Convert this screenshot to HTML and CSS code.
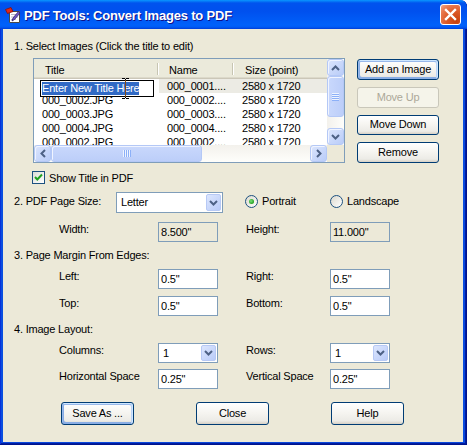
FILE: index.html
```html
<!DOCTYPE html>
<html>
<head>
<meta charset="utf-8">
<title>PDF Tools</title>
<link rel="stylesheet" href="styles.css">
</head>
<body>
<div class="window">
  <div class="titlebar">
    <svg class="app-icon" width="16" height="16" viewBox="0 0 16 16">
      <path d="M4.5 4.5 H14.5 V15.5 H4.5 Z" fill="#fff" stroke="#4a4a4a"/>
      <path d="M6 7.5 H13 M6 10 H13 M6 12.5 H11" stroke="#b8b8c8" stroke-width="1"/>
      <path d="M0.5 2.5 L6 0.5 L8 4.5 L2.5 6.5 Z" fill="#e02818" stroke="#8a1008" stroke-width="0.8"/>
      <path d="M7 14 L8 11 L13.5 4.5 L15 6 L9.5 12.5 Z" fill="#7058c8" stroke="#302070" stroke-width="0.8"/>
    </svg>
    <span class="title">PDF Tools: Convert Images to PDF</span>
    <span class="close-btn">
      <svg width="19" height="19" viewBox="0 0 19 19"><path d="M5 5 L14 14 M14 5 L5 14" stroke="#fff" stroke-width="2.4" stroke-linecap="square"/></svg>
    </span>
  </div>
  <div class="client">
    <div class="sec sec1">1. Select Images (Click the title to edit)</div>

    <div class="list-row">
      <div class="listview">
        <div class="lv-content">
          <div class="lv-header">
            <div class="hcell sep">Title</div>
            <div class="hcell sep">Name</div>
            <div class="hcell">Size (point)</div>
          </div>
          <div class="lv-row first">
            <div class="cell"></div>
            <div class="cell shade">000_0001....</div>
            <div class="cell shade">2580 x 1720</div>
          </div>
          <div class="lv-row">
            <div class="cell">000_0002.JPG</div>
            <div class="cell">000_0002....</div>
            <div class="cell">2580 x 1720</div>
          </div>
          <div class="lv-row">
            <div class="cell">000_0003.JPG</div>
            <div class="cell">000_0003....</div>
            <div class="cell">2580 x 1720</div>
          </div>
          <div class="lv-row">
            <div class="cell">000_0004.JPG</div>
            <div class="cell">000_0004....</div>
            <div class="cell">2580 x 1720</div>
          </div>
          <div class="lv-row">
            <div class="cell">000_0002.JPG</div>
            <div class="cell">000_0002....</div>
            <div class="cell">2580 x 1720</div>
          </div>
          <div class="edit-box"><span class="sel">Enter New Title Here</span></div>
          <svg class="ibeam" width="7" height="21" viewBox="0 0 7 21">
            <path d="M0 0.5 H3 M4 0.5 H7 M3.5 1 V20 M0 20.5 H3 M4 20.5 H7" stroke="#000" stroke-width="1"/>
            <path d="M3.5 2 V19" stroke="#e08020" stroke-width="0.6"/>
          </svg>
        </div>
        <div class="vscroll">
          <div class="sb-btn">
            <svg width="9" height="6" viewBox="0 0 9 6"><path d="M1 5 L4.5 1.5 L8 5" fill="none" stroke="#4d6185" stroke-width="2"/></svg>
          </div>
          <div class="thumb thumb-v"><span class="grip-v"></span></div>
          <div class="track"></div>
          <div class="sb-btn">
            <svg width="9" height="6" viewBox="0 0 9 6"><path d="M1 1 L4.5 4.5 L8 1" fill="none" stroke="#4d6185" stroke-width="2"/></svg>
          </div>
        </div>
        <div class="hscroll">
          <div class="sb-btn">
            <svg width="6" height="9" viewBox="0 0 6 9"><path d="M5 1 L1.5 4.5 L5 8" fill="none" stroke="#4d6185" stroke-width="2"/></svg>
          </div>
          <div class="thumb thumb-h"><span class="grip-h"></span></div>
          <div class="track track-h"></div>
          <div class="sb-btn">
            <svg width="6" height="9" viewBox="0 0 6 9"><path d="M1 1 L4.5 4.5 L1 8" fill="none" stroke="#4d6185" stroke-width="2"/></svg>
          </div>
        </div>
        <div class="corner"></div>
      </div>
      <div class="side-buttons">
        <div class="btn default">Add an Image</div>
        <div class="btn disabled">Move Up</div>
        <div class="btn">Move Down</div>
        <div class="btn">Remove</div>
      </div>
    </div>

    <div class="chk-row">
      <span class="checkbox">
        <svg width="11" height="11" viewBox="0 0 11 11"><path d="M2 5 L4.3 7.5 L9 2.5" fill="none" stroke="#21a121" stroke-width="2"/></svg>
      </span>
      <span class="chk-label">Show Title in PDF</span>
    </div>

    <div class="size-row">
      <span class="size-label">2. PDF Page Size:</span>
      <div class="combo combo-wide">
        <span class="combo-text">Letter</span>
        <span class="combo-btn"><svg width="9" height="6" viewBox="0 0 9 6"><path d="M1 1 L4.5 4.5 L8 1" fill="none" stroke="#4d6185" stroke-width="2"/></svg></span>
      </div>
      <div class="radios">
        <span class="radio-item"><span class="radio on"><span class="dot"></span></span><span class="radio-label">Portrait</span></span>
        <span class="radio-item"><span class="radio"></span><span class="radio-label">Landscape</span></span>
      </div>
    </div>

    <div class="grid-row row-dim">
      <span class="lbl-l">Width:</span>
      <span class="field f-l disabled">8.500"</span>
      <span class="lbl-r">Height:</span>
      <span class="field f-r disabled">11.000"</span>
    </div>

    <div class="sec sec3">3. Page Margin From Edges:</div>

    <div class="grid-row row-m1">
      <span class="lbl-l">Left:</span>
      <span class="field f-l">0.5"</span>
      <span class="lbl-r">Right:</span>
      <span class="field f-r">0.5"</span>
    </div>
    <div class="grid-row row-m2">
      <span class="lbl-l">Top:</span>
      <span class="field f-l">0.5"</span>
      <span class="lbl-r">Bottom:</span>
      <span class="field f-r">0.5"</span>
    </div>

    <div class="sec sec4">4. Image Layout:</div>

    <div class="grid-row row-l1">
      <span class="lbl-l">Columns:</span>
      <div class="combo f-l">
        <span class="combo-text">1</span>
        <span class="combo-btn"><svg width="9" height="6" viewBox="0 0 9 6"><path d="M1 1 L4.5 4.5 L8 1" fill="none" stroke="#4d6185" stroke-width="2"/></svg></span>
      </div>
      <span class="lbl-r">Rows:</span>
      <div class="combo f-r">
        <span class="combo-text">1</span>
        <span class="combo-btn"><svg width="9" height="6" viewBox="0 0 9 6"><path d="M1 1 L4.5 4.5 L8 1" fill="none" stroke="#4d6185" stroke-width="2"/></svg></span>
      </div>
    </div>
    <div class="grid-row row-l2">
      <span class="lbl-l">Horizontal Space</span>
      <span class="field f-l">0.25"</span>
      <span class="lbl-r">Vertical Space</span>
      <span class="field f-r">0.25"</span>
    </div>

    <div class="btn-row">
      <div class="btn default wide">Save As ...</div>
      <div class="btn wide">Close</div>
      <div class="btn wide">Help</div>
    </div>
  </div>
</div>
</body>
</html>
```

FILE: styles.css
```css
* { box-sizing: border-box; margin: 0; padding: 0; }
html, body { width: 467px; height: 445px; overflow: hidden; background: #fff; }
body {
  font-family: "Liberation Sans", Arial, sans-serif;
  font-size: 11px;
  line-height: 13px;
  letter-spacing: -0.2px;
  color: #000;
}

.window {
  width: 467px;
  height: 445px;
  display: flex;
  flex-direction: column;
  background: #0a4ee0;
  border-top-right-radius: 7px;
  box-shadow: inset -1px -1px #00138c, inset 1px 0 #0831d9, inset -2px -2px #001ea0, inset -3px -3px #0a48dc;
}

.titlebar {
  height: 29px;
  flex: none;
  display: flex;
  align-items: center;
  padding: 2px 0 0 5px;
  border-top-right-radius: 7px;
  background: linear-gradient(180deg, #0997ff 0px, #0053ee 3px, #0050ee 11px, #0061fa 25px, #005bf5 27px, #003dd7 29px);
}
.app-icon { flex: none; margin-right: 3px; margin-top: -1px; }
.title {
  flex: 1;
  color: #fff;
  font-weight: bold;
  font-size: 13px;
  letter-spacing: -0.2px;
  text-shadow: 1px 1px #0f1089;
}
.close-btn {
  flex: none;
  width: 21px;
  height: 21px;
  margin-right: 6px;
  margin-top: -3px;
  border: 1px solid #fff;
  border-radius: 3px;
  display: flex;
  align-items: center;
  justify-content: center;
  background: radial-gradient(circle at 80% 85%, #c8400a 0%, #dc5a28 45%, #e8794f 75%, #f3a98a 100%);
}

.client {
  flex: 1;
  margin: 0 4px 3px 3px;
  background: #ece9d8;
  display: flex;
  flex-direction: column;
}

.sec { height: 13px; padding-left: 11px; flex: none; }
.sec1 { margin-top: 11px; }
.sec3 { margin-top: 7px; }
.sec4 { margin-top: 7px; }

/* list row */
.list-row {
  margin-top: 5px;
  height: 105px;
  display: flex;
  padding-left: 30px;
  gap: 12px;
  flex: none;
}
.listview {
  width: 312px;
  height: 105px;
  border: 1px solid #7f9db9;
  background: #fff;
  display: grid;
  grid-template-columns: 293px 17px;
  grid-template-rows: 86px 17px;
}
.lv-content {
  position: relative;
  overflow: hidden;
  white-space: nowrap;
}
.lv-header {
  display: grid;
  grid-template-columns: 125px 75px 93px;
  height: 20px;
  background: #ebeadb;
  box-shadow: inset 0 -1px #cbc7b8, inset 0 -2px #dcd9ca;
}
.hcell { padding: 5px 0 0 10px; overflow: hidden; }
.hcell:first-child { padding-left: 11px; }
.hcell:last-child { padding-left: 11px; }
.sep {
  background:
    linear-gradient(#c7c5b2, #c7c5b2) no-repeat right 1px top 4px / 1px 12px,
    linear-gradient(#fff, #fff) no-repeat right 0 top 4px / 1px 12px;
}
.lv-row {
  display: grid;
  grid-template-columns: 125px 75px 93px;
  height: 14px;
  line-height: 14px;
}
.cell { padding-left: 8px; overflow: hidden; }
.shade { background: #ecebe4; }

.edit-box {
  position: absolute;
  left: 6px;
  top: 21px;
  width: 114px;
  height: 17px;
  border: 1px solid #000;
  background: #fff;
  padding: 1px;
}
.sel {
  display: inline-block;
  height: 13px;
  line-height: 13px;
  background: #316ac5;
  color: #fff;
}
.ibeam { position: absolute; left: 88px; top: 19px; }

/* scrollbars */
.vscroll {
  display: flex;
  flex-direction: column;
  background: linear-gradient(90deg, #f3f1ec, #fefefb);
}
.hscroll {
  display: flex;
  background: linear-gradient(180deg, #f3f1ec, #fefefb);
}
.corner { background: #ece9d8; }
.sb-btn {
  width: 17px;
  height: 17px;
  flex: none;
  border: 1px solid #b4c8f6;
  border-radius: 3px;
  background: linear-gradient(135deg, #dbe5fd, #b9ccf8);
  box-shadow: inset 1px 1px #f0f4ff;
  display: flex;
  align-items: center;
  justify-content: center;
}
.thumb {
  flex: none;
  border: 1px solid #b4c8f6;
  border-radius: 3px;
  background: linear-gradient(90deg, #c9d8fc, #bccef9);
  box-shadow: inset 1px 1px #f0f4ff;
  display: flex;
  align-items: center;
  justify-content: center;
}
.thumb-v { height: 41px; }
.thumb-h { width: 151px; background: linear-gradient(180deg, #c9d8fc, #bccef9); }
.track { flex: 1; }
.grip-v {
  width: 7px;
  height: 8px;
  background: repeating-linear-gradient(180deg, #eef4fe 0 1px, #8cb0f8 1px 2px);
}
.grip-h {
  width: 8px;
  height: 7px;
  background: repeating-linear-gradient(90deg, #eef4fe 0 1px, #8cb0f8 1px 2px);
}

/* buttons */
.side-buttons {
  width: 82px;
  padding-top: 1px;
  display: flex;
  flex-direction: column;
  gap: 7px;
}
.btn {
  height: 21px;
  display: flex;
  align-items: center;
  justify-content: center;
  border: 1px solid #003c74;
  border-radius: 3px;
  background: linear-gradient(180deg, #ffffff 0%, #f6f5f1 45%, #ecebe6 85%, #d6d0c5 100%);
  white-space: nowrap;
}
.btn.default {
  box-shadow: inset -1px 1px #cee7ff, inset 1px 2px #98b8ea, inset -2px 2px #bcd4f6, inset 1px -1px #89ade4, inset 2px -2px #89ade4;
}
.btn.disabled {
  border-color: #c9c7ba;
  color: #aca899;
  background: #f5f4ea;
}

/* checkbox */
.chk-row {
  margin-top: 8px;
  height: 13px;
  padding-left: 29px;
  display: flex;
  gap: 4px;
  flex: none;
}
.checkbox {
  width: 13px;
  height: 13px;
  border: 1px solid #1c5180;
  background: linear-gradient(135deg, #dcdcd7, #ffffff);
  display: flex;
  align-items: center;
  justify-content: center;
}
.chk-label { padding-top: 1px; }

/* page size */
.size-row {
  margin-top: 8px;
  height: 21px;
  padding-left: 11px;
  display: flex;
  flex: none;
}
.size-label { width: 102px; padding-top: 3px; }
.combo {
  height: 21px;
  display: flex;
  border: 1px solid #7f9db9;
  background: #fff;
  padding: 1px;
}
.combo-wide { width: 107px; }
.combo-text { flex: 1; padding-left: 3px; line-height: 17px; }
.combo-btn {
  width: 15px;
  border: 1px solid #b7c9f5;
  border-radius: 2px;
  background: linear-gradient(135deg, #dce6fe, #b9cbf8);
  display: flex;
  align-items: center;
  justify-content: center;
}
.radios { display: flex; margin-left: 22px; padding-top: 3px; }
.radio-item { width: 85px; display: flex; gap: 4px; }
.radio {
  width: 13px;
  height: 13px;
  border-radius: 50%;
  border: 1px solid #1c5180;
  background: linear-gradient(135deg, #dcd9cd, #ffffff);
  display: flex;
  align-items: center;
  justify-content: center;
}
.dot {
  width: 5px;
  height: 5px;
  border-radius: 50%;
  background: radial-gradient(circle at 40% 40%, #7be07b, #21a121 70%);
}
.radio-label { padding-top: 0; }

/* grid rows */
.grid-row {
  display: grid;
  grid-template-columns: 56px 99px 60px 28px 84px 60px;
  height: 20px;
  flex: none;
}
.row-dim { margin-top: 9px; }
.row-m1 { margin-top: 7px; }
.row-m2 { margin-top: 7px; }
.row-l1 { margin-top: 7px; }
.row-l2 { margin-top: 6px; }
.lbl-l { grid-column: 2; padding-top: 1px; }
.lbl-r { grid-column: 5; padding-top: 1px; }
.f-l { grid-column: 3; }
.f-r { grid-column: 6; }
.row-l1 .combo { height: 20px; }
.row-l1 .combo-text { line-height: 16px; }
.field {
  height: 20px;
  border: 1px solid #7f9db9;
  background: #fff;
  padding-left: 2px;
  line-height: 18px;
}
.field.disabled { background: #ece9d8; }

/* bottom buttons */
.btn-row {
  margin-top: 13px;
  height: 23px;
  display: flex;
  gap: 62px;
  padding-left: 58px;
  flex: none;
}
.btn.wide { width: 73px; height: 23px; }
```
